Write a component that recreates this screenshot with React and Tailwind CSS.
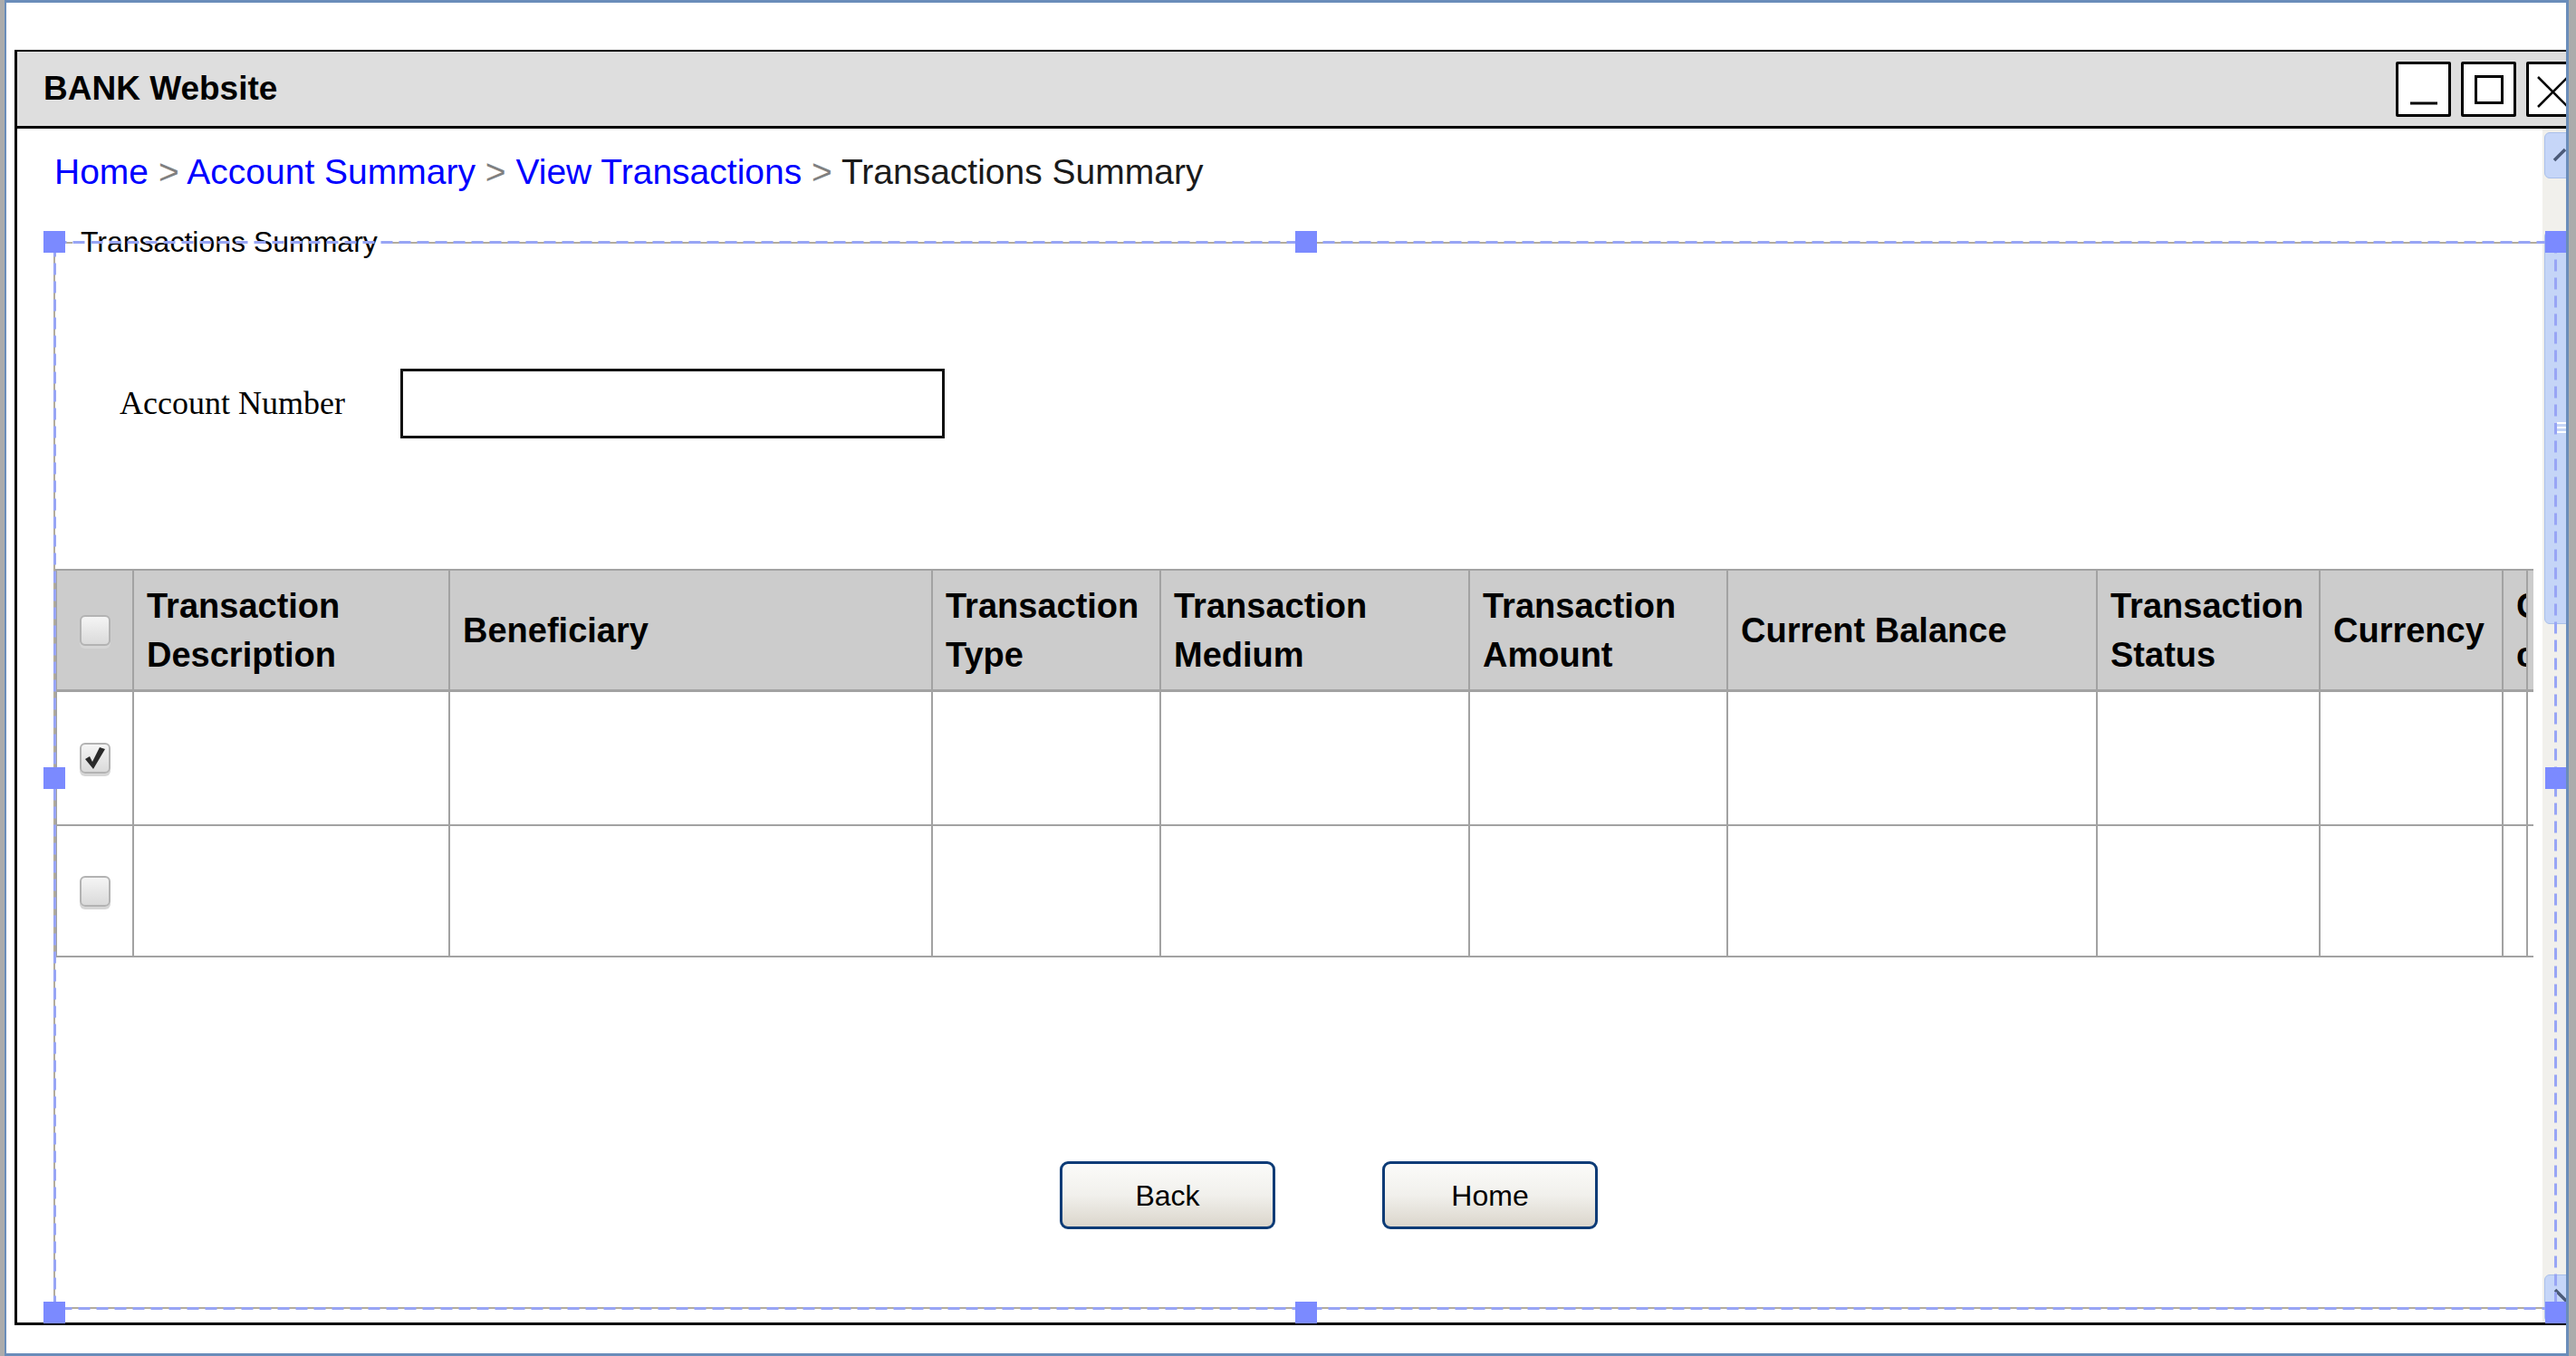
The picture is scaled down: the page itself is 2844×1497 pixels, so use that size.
import React from "react";

const headerCells = [
  { w: "w-[349px]", lines: ["Transaction", "Description"] },
  { w: "w-[533px]", lines: ["Beneficiary"] },
  { w: "w-[252px]", lines: ["Transaction", "Type"] },
  { w: "w-[341px]", lines: ["Transaction", "Medium"] },
  { w: "w-[285px]", lines: ["Transaction", "Amount"] },
  { w: "w-[408px]", lines: ["Current Balance"] },
  { w: "w-[246px]", lines: ["Transaction", "Status"] },
  { w: "w-[202px]", lines: ["Currency"] },
  { w: "w-[27px]", lines: ["Cheque", "clearing"] },
  { w: "w-[60px]", lines: [] },
];

const rows = [
  { checked: true, h: "h-[146px]" },
  { checked: false, h: "h-[143px]" },
];

function Checkbox({ checked }) {
  return (
    <div className="flex h-[34px] w-[34px] items-center justify-center rounded-[6px] border-2 border-[#b3b3b3] bg-linear-to-b from-[#f5f5f5] to-[#dadada] shadow-[0_3px_0_#d6d6d6]">
      {checked && (
        <svg width="26" height="26" viewBox="0 0 26 26">
          <path d="M2 14 L7 11 L10 17 L18 1 L24 3 L11 25 Z" fill="#2a2a2a" />
        </svg>
      )}
    </div>
  );
}

function TitleButton({ children }) {
  return (
    <div className="h-[61px] w-[61px] shrink-0 rounded-[2px] border-[3px] border-black bg-white">
      <svg width="55" height="55" viewBox="0 0 55 55">
        {children}
      </svg>
    </div>
  );
}

function Handle({ className }) {
  return <div className={`absolute h-[24px] w-[24px] bg-[#7b8aff] ${className}`} />;
}

export default function App() {
  const sans = "font-['Liberation_Sans',Arial,sans-serif]";
  return (
    <div className="h-[1497px] w-[2844px] overflow-hidden bg-[#acacac] pl-[5px] pr-[8px]">
      <div className="h-full overflow-hidden border-t-[3px] border-b-[3px] border-l-[2px] border-r-[3px] border-[#6a8dba] bg-white pl-[9px] pt-[52px]">
        {/* window */}
        <div className="h-[1408px] border-t-2 border-b-[3px] border-l-[3px] border-black">
          {/* title bar */}
          <div className="flex h-[85px] items-center overflow-hidden border-b-[3px] border-black bg-[#dedede] pl-[29px]">
            <span className={`${sans} text-[37px] font-bold text-black`}>BANK Website</span>
            <div className="-mr-[17px] ml-auto flex gap-[11px]">
              <TitleButton>
                <line x1="13" y1="43" x2="43" y2="43" stroke="black" strokeWidth="3" />
              </TitleButton>
              <TitleButton>
                <rect x="13.5" y="13.5" width="29" height="29" fill="none" stroke="black" strokeWidth="3" />
              </TitleButton>
              <TitleButton>
                <line x1="10" y1="14" x2="43" y2="47" stroke="black" strokeWidth="2.5" />
                <line x1="10" y1="47" x2="43" y2="14" stroke="black" strokeWidth="2.5" />
              </TitleButton>
            </div>
          </div>

          {/* body */}
          <div className="relative flex h-[1318px]">
            <div className="flex-1 overflow-hidden">
              <div className={`${sans} pl-[41px] pt-[25px] text-[39px] leading-[46px] whitespace-nowrap`}>
                <span className="text-[#0000ff]">Home</span>
                <span className="text-[#808080]"> &gt; </span>
                <span className="text-[#0000ff]">Account Summary</span>
                <span className="text-[#808080]"> &gt; </span>
                <span className="text-[#0000ff]">View Transactions</span>
                <span className="text-[#808080]"> &gt; </span>
                <span className="text-[#1a1a1a]">Transactions Summary</span>
              </div>

              <fieldset className="ml-[40px] mt-[36px] h-[1196px] w-[2800px] rounded-[10px] border-2 border-[#b3ac9b]">
                <legend className={`${sans} ml-[19px] pl-[9px] pr-[16px] text-[32px] leading-[37px] text-black`}>
                  Transactions Summary
                </legend>

                <div className="mt-[121px] flex items-center pl-[71px]">
                  <span className="w-[310px] font-['Liberation_Serif',serif] text-[36px] leading-[41px] text-black">
                    Account Number
                  </span>
                  <div className="h-[77px] w-[601px] border-[3px] border-[#111] bg-white" />
                </div>

                <div className={`${sans} mt-[144px] w-[2736px] overflow-hidden border-l-2 border-t-2 border-[#a2a2a2]`}>
                  <div className="flex border-b-[3px] border-[#a2a2a2] bg-[#cccccc]">
                    <div className="flex h-[131px] w-[85px] shrink-0 items-center justify-center border-r-2 border-[#a2a2a2]">
                      <Checkbox checked={false} />
                    </div>
                    {headerCells.map((c, i) => (
                      <div
                        key={i}
                        className={`flex h-[131px] shrink-0 items-center overflow-hidden whitespace-nowrap border-r-2 border-[#a2a2a2] pl-[14px] ${c.w}`}
                      >
                        <div className="text-[38px] font-bold leading-[54px] text-black">
                          {c.lines.map((l) => (
                            <div key={l}>{l}</div>
                          ))}
                        </div>
                      </div>
                    ))}
                  </div>
                  {rows.map((r, ri) => (
                    <div key={ri} className="flex border-b-2 border-[#a2a2a2] bg-white">
                      <div className={`flex w-[85px] shrink-0 items-center justify-center border-r-2 border-[#a2a2a2] ${r.h}`}>
                        <Checkbox checked={r.checked} />
                      </div>
                      {headerCells.map((c, i) => (
                        <div key={i} className={`shrink-0 border-r-2 border-[#a2a2a2] ${c.w} ${r.h}`} />
                      ))}
                    </div>
                  ))}
                </div>

                <div className="mt-[225px] flex gap-[118px] pl-[1109px]">
                  {["Back", "Home"].map((b) => (
                    <button
                      key={b}
                      className={`${sans} flex h-[75px] w-[238px] items-center justify-center rounded-[9px] border-[3px] border-[#0c3b76] bg-linear-to-b from-[#fbfbf9] via-[#f1f0ec] to-[#dbd6cc] text-[32px] text-black`}
                    >
                      {b}
                    </button>
                  ))}
                </div>
              </fieldset>
            </div>

            {/* scrollbar */}
            <div className="flex w-[26px] shrink-0 flex-col bg-[#f1f0ec] pl-[2px]">
              <div className="mt-[4px] h-[51px] w-[30px] rounded-[6px] border border-[#a9bfe9] bg-[#c6d6f8]">
                <svg width="30" height="51" viewBox="0 0 30 51">
                  <path d="M10 30 L22 18" stroke="#4b5a78" strokeWidth="3.5" />
                </svg>
              </div>
              <div className="mt-[58px] flex h-[434px] w-[30px] items-center rounded-[6px] border border-[#a9bfe9] bg-[#c5d5f7] pl-[10px]">
                <div className="flex w-[14px] flex-col gap-[3px]">
                  <div className="h-[2px] bg-white" />
                  <div className="h-[2px] bg-white" />
                  <div className="h-[2px] bg-white" />
                </div>
              </div>
              <div className="mt-[718px] h-[53px] w-[30px] rounded-[6px] border border-[#a9bfe9] bg-[#c6d6f8]">
                <svg width="30" height="53" viewBox="0 0 30 53">
                  <path d="M11 16 L24 29" stroke="#4b5a78" strokeWidth="3.5" />
                </svg>
              </div>
            </div>

            {/* selection marquee */}
            <svg className="pointer-events-none absolute left-[40px] top-[124px]" width="2764" height="1180">
              <rect x="1.5" y="1.5" width="2761" height="1177" fill="none" stroke="#98a5f5" strokeWidth="3" strokeDasharray="13 7" />
            </svg>
            <Handle className="left-[29px] top-[113px]" />
            <Handle className="left-[1411px] top-[113px]" />
            <Handle className="left-[2791px] top-[113px]" />
            <Handle className="left-[29px] top-[705px]" />
            <Handle className="left-[2791px] top-[705px]" />
            <Handle className="left-[29px] top-[1295px]" />
            <Handle className="left-[1411px] top-[1295px]" />
            <Handle className="left-[2791px] top-[1295px]" />
          </div>
        </div>
      </div>
    </div>
  );
}
